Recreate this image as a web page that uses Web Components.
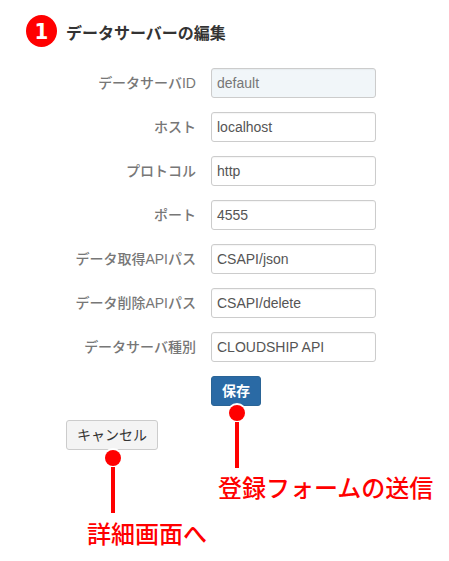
<!DOCTYPE html>
<html lang="ja">
<head>
<meta charset="utf-8">
<title>データサーバーの編集</title>
<style>
  html, body { margin: 0; padding: 0; background: #fff; }
  body { width: 449px; height: 561px; overflow: hidden; position: relative; }
</style>
</head>
<body>
<edit-form>
  <step-heading num="1">データサーバーの編集</step-heading>
  <form-row label="データサーバID" value="default" readonly></form-row>
  <form-row label="ホスト" value="localhost"></form-row>
  <form-row label="プロトコル" value="http"></form-row>
  <form-row label="ポート" value="4555"></form-row>
  <form-row label="データ取得APIパス" value="CSAPI/json"></form-row>
  <form-row label="データ削除APIパス" value="CSAPI/delete"></form-row>
  <form-row label="データサーバ種別" value="CLOUDSHIP API"></form-row>
  <form-actions></form-actions>
</edit-form>
<call-out style="left:113px;top:458px" text="詳細画面へ" tx="-26" ty="57"></call-out>
<call-out style="left:237px;top:413px" text="登録フォームの送信" tx="-19" ty="56"></call-out>

<script>
const FONT = '"Liberation Sans", "Noto Sans CJK JP", sans-serif';

class EditForm extends HTMLElement {
  constructor() {
    super();
    this.attachShadow({ mode: 'open' });
    this.shadowRoot.innerHTML = `
      <style>
        :host { display: flex; flex-direction: column; gap: 14px; padding: 15px 0 0 26px; font-family: ${FONT}; }
      </style>
      <slot></slot>`;
  }
}

class StepHeading extends HTMLElement {
  constructor() {
    super();
    this.attachShadow({ mode: 'open' });
    this.shadowRoot.innerHTML = `
      <style>
        :host { display: flex; align-items: center; gap: 9px; height: 32px; margin-bottom: 7px; }
        .num {
          width: 31px; height: 32px; border-radius: 50%; background: #f00; color: #fff;
          display: flex; align-items: center; justify-content: center;
          font: bold 22px "DejaVu Sans Condensed", "DejaVu Sans", sans-serif;
        }
        .text { font: bold 16px ${FONT}; color: #333; padding-top: 2px; }
      </style>
      <span class="num">${this.getAttribute('num')}</span>
      <span class="text"><slot></slot></span>`;
  }
}

class FormRow extends HTMLElement {
  constructor() {
    super();
    this.attachShadow({ mode: 'open' });
    const ro = this.hasAttribute('readonly');
    this.shadowRoot.innerHTML = `
      <style>
        :host { display: grid; grid-template-columns: 170px 165px; column-gap: 15px; align-items: center; height: 30px; }
        .label { text-align: right; font: 500 14px ${FONT}; color: #777; white-space: nowrap; padding-bottom: 2px; }
        .field {
          box-sizing: border-box; height: 30px; padding: 0 5px;
          border: 1px solid #ccc; border-radius: 3px;
          font: 14px/28px ${FONT}; color: ${ro ? '#777' : '#555'};
          background: ${ro ? '#f1f6f9' : '#fff'}; white-space: nowrap;
          box-shadow: inset 0 1px 1px rgba(0,0,0,.04);
        }
      </style>
      <div class="label">${this.getAttribute('label')}</div>
      <div class="field">${this.getAttribute('value')}</div>`;
  }
}

class FormActions extends HTMLElement {
  constructor() {
    super();
    this.attachShadow({ mode: 'open' });
    this.shadowRoot.innerHTML = `
      <style>
        :host { display: block; font-family: ${FONT}; }
        .btn {
          box-sizing: border-box; height: 30px; display: flex; align-items: center; justify-content: center;
          border-radius: 3px; font-size: 14px; padding-bottom: 2px;
        }
        .save { width: 50px; margin-left: 185px; background: #2a6aa5; color: #fff; font-weight: bold; border: 1px solid #2a6496; }
        .cancel { width: 92px; margin: 14px 0 0 40px; background: #f4f4f4; color: #333; border: 1px solid #ccc; }
      </style>
      <div class="btn save">保存</div>
      <div class="btn cancel">キャンセル</div>`;
  }
}

class CallOut extends HTMLElement {
  constructor() {
    super();
    this.attachShadow({ mode: 'open' });
    this.shadowRoot.innerHTML = `
      <style>
        :host { position: absolute; display: block; width: 0; height: 0; }
        .dot { position: absolute; left: -8px; top: -8px; width: 16px; height: 16px; border-radius: 50%; background: #f00; box-shadow: 0 0 0 2px #fff; }
        .line { position: absolute; left: -2px; top: 9px; width: 4px; height: 46px; background: #f00; }
        .text { position: absolute; left: ${this.getAttribute('tx')}px; top: ${this.getAttribute('ty')}px; white-space: nowrap;
          font: 500 24px/36px "Noto Sans CJK JP", sans-serif; color: #f00; }
      </style>
      <div class="dot"></div>
      <div class="line"></div>
      <div class="text">${this.getAttribute('text')}</div>`;
  }
}

customElements.define('edit-form', EditForm);
customElements.define('step-heading', StepHeading);
customElements.define('form-row', FormRow);
customElements.define('form-actions', FormActions);
customElements.define('call-out', CallOut);
</script>
</body>
</html>
